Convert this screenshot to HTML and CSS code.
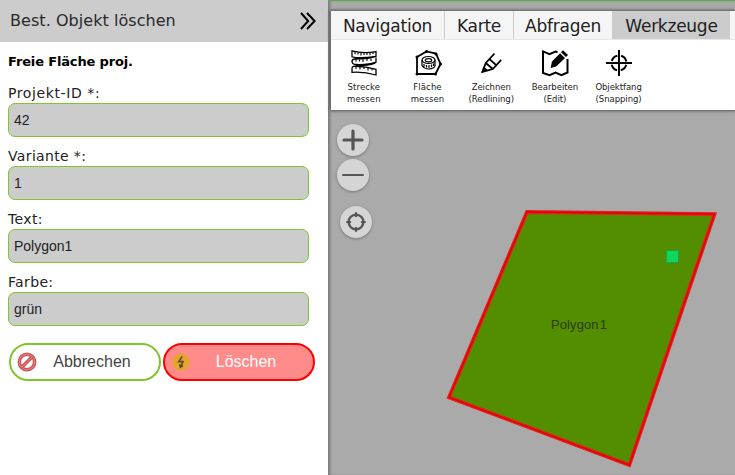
FILE: index.html
```html
<!DOCTYPE html>
<html lang="de">
<head>
<meta charset="utf-8">
<title>Best. Objekt löschen</title>
<link rel="stylesheet" href="styles.css">
</head>
<body>
<div class="app">
  <aside class="panel">
    <header class="panel-head">
      <h1>Best. Objekt löschen</h1>
      <svg class="chevrons" width="18" height="20" viewBox="0 0 18 20"><path d="M2 2 9.2 10 2 18M8 2 15.6 10 8 18"/></svg>
    </header>
    <form class="form">
      <h2>Freie Fläche proj.</h2>
      <div class="field"><label class="l-id" for="pid">Projekt-ID *:</label><input id="pid" value="42"></div>
      <div class="field"><label for="var">Variante *:</label><input id="var" value="1"></div>
      <div class="field"><label for="txt">Text:</label><input id="txt" value="Polygon1"></div>
      <div class="field"><label for="col">Farbe:</label><input id="col" value="grün"></div>
      <div class="actions">
        <button type="button" class="btn cancel">
          <svg width="20" height="20" viewBox="0 0 20 20"><circle cx="10" cy="10" r="7.7" fill="#fff" stroke="#cf5556" stroke-width="3.6"/><path d="M5 15 15 5" stroke="#cf5556" stroke-width="3.4"/><circle cx="10" cy="10" r="7.7" fill="none" stroke="#e98f8f" stroke-width=".8"/><path d="M5 15 15 5" stroke="#e98f8f" stroke-width=".8"/></svg>
          <span>Abbrechen</span>
        </button>
        <button type="button" class="btn delete">
          <svg width="18" height="18" viewBox="0 0 18 18"><circle cx="9" cy="9" r="8.6" fill="#e3a62b"/><path d="M10.2 3.4 6.8 8.6 11 8.6 8.9 13.5M7.6 11.3 8.5 14.3 11 12.6" fill="none" stroke="#5b4b35" stroke-width="1.6"/></svg>
          <span>Löschen</span>
        </button>
      </div>
    </form>
  </aside>
  <main class="map">
    <svg class="canvas" width="407" height="475" viewBox="328 0 407 475">
      <path d="M527 212 714.5 214 629.3 465 449 397.3Z" fill="#528e00" stroke="#ee1c1c" stroke-width="3.8"/>
      <path d="M527 212 714.5 214 629.3 465 449 397.3Z" fill="none" stroke="#d40808" stroke-width="1.4"/>
      <rect x="666.5" y="250.5" width="12" height="12" fill="#10d65b" stroke="#16a551"/>
      <text x="551" y="329">Polygon<tspan dx="1">1</tspan></text>
    </svg>
    <section class="ribbon">
      <nav class="tabs">
        <a class="tab nav">Navigation</a><a class="tab karte">Karte</a><a class="tab abfragen">Abfragen</a><a class="tab tools-tab">Werkzeuge</a>
      </nav>
      <div class="tools">
        <div class="tool"><svg viewBox="0 0 28 28"><g fill="none" stroke="#000" stroke-width="1.3"><path d="M2 1.8Q13 4.8 26 2.6V7.4Q14 9.2 6 8.6L2 7.8ZM26 7.4Q20 9.8 5 10 1.8 10.3 2 12.5 2.3 15.6 6 15.5 18 16 26 13.2V8.6M26 13.2Q24 16.4 6 17 1.5 17 2 20V23.3Q14 22.5 26 26V20.3Q14 17 4 17.4"/><path stroke-width="1.1" d="M5 3V5.3M8 3.4V5.5M11 3.8V6.6M14 4V6M17 4V6M20 3.6V6.3M23 3.2V5.2M6 10.5V12.8M9.5 10.5V12.5M13 10.3V13M17 10V12M21 9.4V12M6 17.8V20M10 17.6V20.6M14 18V20M18 18.6V21.5M22 19.3V21.5"/></g></svg><span class="s-wide">Strecke<br>messen</span></div>
        <div class="tool"><svg viewBox="0 0 28 28"><path d="M3 8 12.5 2.4 22 4.6 26.5 15 21.5 25H3Z" fill="none" stroke="#000" stroke-width="1.8"/><g fill="#000"><circle cx="3" cy="8" r="1.5"/><circle cx="12.5" cy="2.4" r="1.5"/><circle cx="22" cy="5" r="1.5"/><circle cx="26.5" cy="15" r="1.5"/><circle cx="21.5" cy="25" r="1.5"/><circle cx="3" cy="25" r="1.5"/></g><g fill="none" stroke="#000" stroke-width="1.2"><ellipse cx="14.5" cy="11" rx="6.5" ry="3.5"/><ellipse cx="14.5" cy="11.2" rx="3.2" ry="1.6"/><path d="M8 11V16.5Q10 20 15 20 20 19.5 21 17V11M10 15V18M12.5 16V18.5M15 16V19M17.5 15.5V18M19.5 14.5V17"/></g></svg><span class="s-wide">Fläche<br>messen</span></div>
        <div class="tool"><svg viewBox="0 0 28 28"><path d="M17.5 4.5 8.8 14 5.5 22.8 15.8 20 24.2 10.8M8.8 14 15.8 20M12.3 10 19.2 16.2" fill="none" stroke="#000" stroke-width="1.8"/><path d="M6.6 17.5 11.4 21.6 4.3 23.5Z"/></svg><span>Zeichnen<br>(Redlining)</span></div>
        <div class="tool"><svg viewBox="0 0 28 28"><path d="M16.5 3.2 14.5 2.6 8.5 5.1 2 2.4V24L8.5 26.2 14.5 23.5 20.5 26.2 26.5 23.5V10" fill="none" stroke="#000" stroke-width="2"/><path d="M19 4.2 24 9 15.2 17.6 9.6 19 11 12.6Z"/><path d="M20 3.3 22 1.3 27 6 25 8Z"/></svg><span>Bearbeiten<br>(Edit)</span></div>
        <div class="tool"><svg viewBox="0 0 28 28"><circle cx="14" cy="14" r="7.5" fill="none" stroke="#000" stroke-width="2" stroke-dasharray="8 3.78" stroke-dashoffset="-1.9"/><path d="M14 1V27M1 14H27" stroke="#000" stroke-width="2"/></svg><span>Objektfang<br>(Snapping)</span></div>
      </div>
    </section>
    <div class="controls">
      <button type="button" class="round"><svg viewBox="0 0 32 32"><path d="M16 7V25M7 16H25" stroke-width="3.2" stroke-linecap="round"/></svg></button>
      <button type="button" class="round"><svg viewBox="0 0 32 32"><path d="M6 16H26" stroke-width="2" stroke-linecap="round"/></svg></button>
      <button type="button" class="round locate"><svg viewBox="0 0 32 32"><circle cx="16" cy="16" r="7.4" stroke-width="2.4"/><path d="M16 6.3V11M16 21V25.7M6.3 16H11M21 16H25.7" stroke-width="2.2"/></svg></button>
    </div>
  </main>
</div>
</body>
</html>
```
FILE: styles.css
```css
* { box-sizing: border-box; }
body { margin: 0; font-family: "DejaVu Sans", sans-serif; color: #222; overflow: hidden; }
.app { display: flex; width: 735px; height: 475px; background: #fff; }

.panel { width: 328px; flex: none; background: #fff; }
.panel-head { height: 42px; padding: 0 11px 0 10px; background: #ccc; display: flex; align-items: center; justify-content: space-between; }
h1 { margin: 0; font-size: 16px; font-weight: 400; line-height: 20px; white-space: nowrap; color: #2a2a2a; letter-spacing: .05px; }
.chevrons { fill: none; stroke: #000; stroke-width: 2; }
.form { padding: 11px 8px 0; }
h2 { margin: 0 0 13px; font-size: 13px; line-height: 18px; color: #000; letter-spacing: -.15px; }
.field { height: 63px; }
.field label { display: block; height: 19px; padding-top: 1px; font-size: 14px; line-height: 17px; white-space: nowrap; letter-spacing: .35px; }
.field label.l-id { letter-spacing: .6px; }
.field input { display: block; width: 301px; height: 34px; padding: 0 5px; border: 1px solid #80c62b; border-radius: 7px; background: #ccc; font: 14px "Liberation Sans", sans-serif; color: #222; }
.actions { display: flex; gap: 2px; margin: 7px 0 0 1px; }
.btn { width: 152px; height: 38px; padding: 0 6px; border: 2px solid #80c62b; border-radius: 19px; background: #fff; display: flex; align-items: center; font: 16px "Liberation Sans", sans-serif; color: #444; }
.btn span { flex: 1; text-align: center; padding-right: 6px; }
.btn svg { flex: none; }
.btn.delete { border-color: #f00; background: #ff8b8b; color: #fff; padding-left: 7px; }
.btn.delete span { padding-right: 5px; }

.map { position: relative; flex: 1; background: #aaa; border-top: 1px solid #52b043; box-shadow: inset 3px 0 3px -1px #777; }
.canvas { position: absolute; left: 0; top: -1px; }
.canvas text { font: 13px "Liberation Sans", sans-serif; fill: #2c3b08; letter-spacing: .1px; }
.ribbon { position: relative; margin: 10px 0 0 3px; height: 99px; background: #fff; box-shadow: 0 0 3px 1px #555; }
.tabs { display: flex; height: 29px; background: #f5f5f5; border-bottom: 1px solid #e8e8e8; }
.tab { height: 28px; display: flex; align-items: center; justify-content: center; padding-top: 2px; font-size: 17px; letter-spacing: -.25px; border-right: 1px solid #ccc; white-space: nowrap; color: #222; }
.nav { width: 114px; }
.karte { width: 69px; }
.abfragen { width: 99px; }
.tools-tab { width: 117px; padding-left: 1px; background: #ccc; }
.tools { display: flex; padding-left: 1px; }
.tool { width: 63.7px; padding-top: 9px; display: flex; flex-direction: column; align-items: center; }
.tool svg { width: 28px; height: 28px; }
.tool span { margin-top: 4px; font-size: 8.5px; line-height: 12px; letter-spacing: -.05px; text-align: center; white-space: nowrap; }
.tool .s-wide { letter-spacing: .1px; }
.controls { position: relative; display: flex; flex-direction: column; gap: 3px; padding: 14px 0 0 9px; align-items: flex-start; }
.round { width: 32px; height: 32px; padding: 0; border: 0; border-radius: 50%; background: #d5d5d5; box-shadow: 0 1px 3px #777; }
.round svg { display: block; fill: none; stroke: #555; }
.round.locate { margin: 12px 0 0 3px; }
```
